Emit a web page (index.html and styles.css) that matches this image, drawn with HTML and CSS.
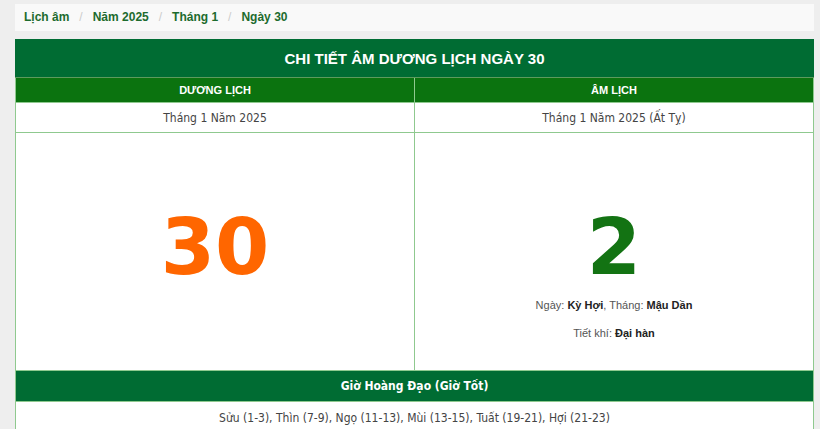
FILE: index.html
```html
<!DOCTYPE html>
<html lang="vi">
<head>
<meta charset="utf-8">
<link rel="stylesheet" href="styles.css">
</head>
<body>
<div class="page">
  <nav class="crumbs"><a>Lịch âm</a><span class="sep">/</span><a>Năm 2025</a><span class="sep">/</span><a>Tháng 1</a><span class="sep">/</span><a>Ngày 30</a></nav>
  <table class="cal">
    <tr><th colspan="2" class="title">CHI TIẾT ÂM DƯƠNG LỊCH NGÀY 30</th></tr>
    <tr><th class="head">DƯƠNG LỊCH</th><th class="head">ÂM LỊCH</th></tr>
    <tr><td class="month">Tháng 1 Năm 2025</td><td class="month">Tháng 1 Năm 2025 (Ất Tỵ)</td></tr>
    <tr>
      <td class="big"><div class="solar">30</div></td>
      <td class="big">
        <div class="lunar">2</div>
        <p class="info">Ngày: <b>Kỳ Hợi</b>, Tháng: <b>Mậu Dần</b></p>
        <p class="info">Tiết khí: <b>Đại hàn</b></p>
      </td>
    </tr>
    <tr><th colspan="2" class="sub">Giờ Hoàng Đạo (Giờ Tốt)</th></tr>
    <tr><td colspan="2" class="hours">Sửu (1-3), Thìn (7-9), Ngọ (11-13), Mùi (13-15), Tuất (19-21), Hợi (21-23)</td></tr>
  </table>
</div>
</body>
</html>
```
FILE: styles.css
```css
html, body {
  margin: 0;
  padding: 0;
  background: #eeeeee;
  font-family: "Liberation Sans", Arial, sans-serif;
  overflow: hidden;
}
.page {
  padding: 4px 6px 0 15px;
}
.crumbs {
  background: #f9f9f9;
  height: 27px;
  box-sizing: border-box;
  padding: 6px 9px 0;
  font-size: 12px;
  font-weight: bold;
  color: #1d6b2e;
}
.crumbs a { color: #1d6b2e; }
.crumbs .sep {
  color: #cccccc;
  font-weight: normal;
  padding: 0 10px;
}
.cal {
  margin-top: 8px;
  width: 100%;
  border-collapse: collapse;
  background: #ffffff;
  table-layout: fixed;
}
.cal th, .cal td {
  border: 1px solid #8fc98f;
  text-align: center;
  padding: 0;
}
.title {
  background: #006c33;
  color: #fff;
  font-size: 15px;
  height: 37px;
  border-color: #006c33 #006c33 #5d9a5d !important;
}
.head {
  background: #0b730f;
  color: #fff;
  font-size: 11px;
  height: 24px;
}
.month {
  font-family: "DejaVu Sans Condensed", "DejaVu Sans", sans-serif;
  font-size: 12px;
  color: #444;
  height: 29px;
}
.big {
  height: 237px;
  vertical-align: top;
}
.solar, .lunar {
  font-family: "DejaVu Sans", Verdana, sans-serif;
  font-weight: bold;
  font-size: 78px;
  line-height: 1;
  margin-top: 75px;
}
.solar { color: #ff6600; }
.lunar { color: #137313; }
.info {
  margin: 13px 0 0;
  font-size: 11px;
  color: #555;
}
.info + .info { margin-top: 16px; }
.info b { color: #222; }
.sub {
  background: #006c33;
  color: #fff;
  font-family: "DejaVu Sans Condensed", "DejaVu Sans", sans-serif;
  font-size: 12px;
  font-weight: bold;
  height: 30px;
}
.hours {
  font-family: "DejaVu Sans Condensed", "DejaVu Sans", sans-serif;
  font-size: 12px;
  color: #444;
  height: 32px;
}
```
